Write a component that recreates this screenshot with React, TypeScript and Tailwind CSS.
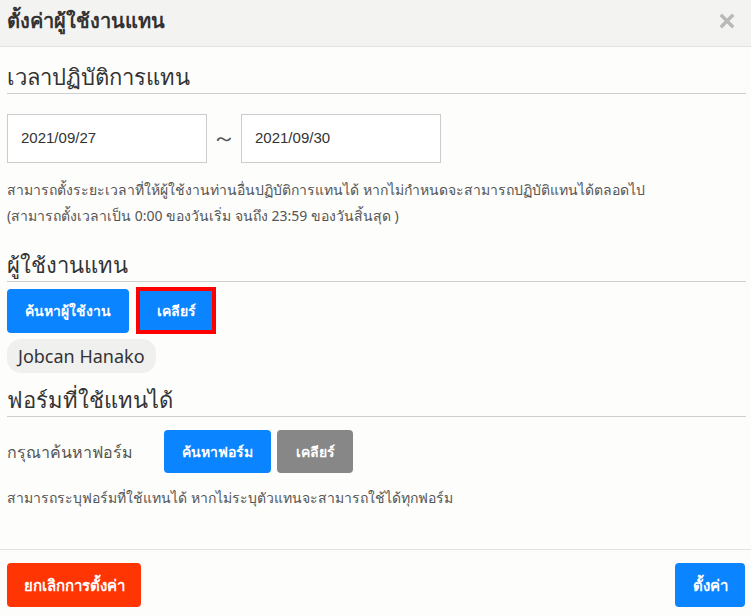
import React from 'react';

const thai = { fontFamily: '"Noto Sans", "DejaVu Sans", sans-serif' };

const SectionTitle = ({ children }: { children: React.ReactNode }) => (
    <h2 className="text-[22px] leading-[30px] text-[#333] border-b border-[#cfcfcf] pb-[2px]">{children}</h2>
);

export default function App() {
    return (
        <div className="w-[751px] h-[615px] bg-[#fdfdfb] flex flex-col overflow-hidden" style={thai}>
            {/* Header */}
            <div className="h-[47px] flex items-center justify-between bg-[#f3f3f1] border-b border-[#e2e2e0] pl-[7px] pr-[16px]">
                <h1 className="text-[20px] font-bold text-[#333] mt-[-4px]">ตั้งค่าผู้ใช้งานแทน</h1>
                <svg width="16" height="16" viewBox="0 0 16 16" className="mt-[-4px]">
                    <path d="M3 3 L13 13 M13 3 L3 13" stroke="#b9b9b9" strokeWidth="3.4" strokeLinecap="square" />
                </svg>
            </div>

            {/* Body */}
            <div className="flex-1 px-[7px] pr-[5px]">
                <div className="mt-[14px]">
                    <SectionTitle>เวลาปฏิบัติการแทน</SectionTitle>
                </div>

                <div className="flex items-center mt-[20px]">
                    <div className="w-[200px] h-[49px] border border-[#cccccc] bg-white flex items-center pl-[13px] text-[15px] text-[#333]" style={{ fontFamily: '"Liberation Sans", Arial, sans-serif' }}>
                        2021/09/27
                    </div>
                    <span className="w-[34px] text-center text-[24px] leading-none text-[#555] mt-[-4px]">～</span>
                    <div className="w-[200px] h-[49px] border border-[#cccccc] bg-white flex items-center pl-[13px] text-[15px] text-[#333]" style={{ fontFamily: '"Liberation Sans", Arial, sans-serif' }}>
                        2021/09/30
                    </div>
                </div>

                <div className="mt-[14px] text-[14px] leading-[26px] text-[#555]">
                    <p>สามารถตั้งระยะเวลาที่ให้ผู้ใช้งานท่านอื่นปฏิบัติการแทนได้ หากไม่กำหนดจะสามารถปฏิบัติแทนได้ตลอดไป</p>
                    <p>(สามารถตั้งเวลาเป็น 0:00 ของวันเริ่ม จนถึง 23:59 ของวันสิ้นสุด )</p>
                </div>

                <div className="mt-[20px]">
                    <SectionTitle>ผู้ใช้งานแทน</SectionTitle>
                </div>

                <div className="flex items-center gap-[7px] mt-[5px]">
                    <button className="h-[44px] w-[122px] rounded-[4px] bg-[#0a84ff] text-white text-[14px] font-bold">ค้นหาผู้ใช้งาน</button>
                    <button className="h-[47px] w-[80px] bg-[#0a84ff] text-white text-[14px] font-bold border-[4px] border-[#ff0000]">เคลียร์</button>
                </div>

                <div className="flex mt-[5px]">
                    <div className="flex items-center h-[34px] px-[11px] rounded-[14px] bg-[#f0f0ef] text-[18px] text-[#333]">
                        Jobcan Hanako
                    </div>
                </div>

                <div className="mt-[11px]">
                    <SectionTitle>ฟอร์มที่ใช้แทนได้</SectionTitle>
                </div>

                <div className="flex items-center mt-[13px]">
                    <span className="w-[157px] text-[16px] text-[#555]">กรุณาค้นหาฟอร์ม</span>
                    <button className="h-[43px] w-[107px] rounded-[4px] bg-[#0a84ff] text-white text-[14px] font-bold">ค้นหาฟอร์ม</button>
                    <button className="ml-[6px] h-[43px] w-[76px] rounded-[4px] bg-[#878787] text-white text-[14px] font-bold">เคลียร์</button>
                </div>

                <p className="mt-[15px] text-[14px] leading-[20px] text-[#555]">สามารถระบุฟอร์มที่ใช้แทนได้ หากไม่ระบุตัวแทนจะสามารถใช้ได้ทุกฟอร์ม</p>
            </div>

            {/* Footer */}
            <div className="h-[66px] border-t border-[#e2e2e0] flex items-start justify-between px-[7px] pr-[6px] pt-[13px]">
                <button className="h-[44px] w-[134px] rounded-[4px] bg-[#ff3503] text-white text-[15px] font-bold">ยกเลิกการตั้งค่า</button>
                <button className="h-[44px] w-[70px] rounded-[4px] bg-[#0a84ff] text-white text-[15px] font-bold">ตั้งค่า</button>
            </div>
        </div>
    );
}
